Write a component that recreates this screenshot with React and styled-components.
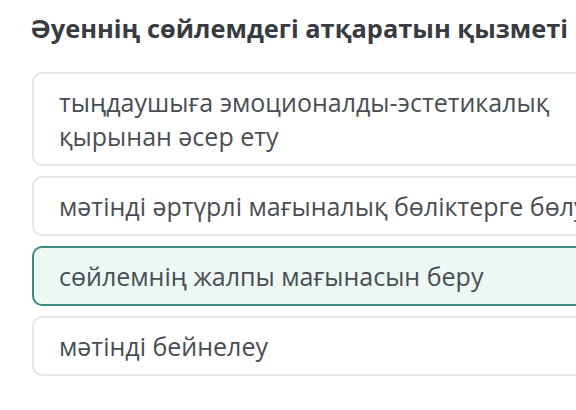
import React from 'react'
import styled, { createGlobalStyle } from 'styled-components'

const GlobalStyle = createGlobalStyle`
  html, body {
    margin: 0;
    padding: 0;
    background: #ffffff;
    overflow: hidden;
  }
  body {
    font-family: "Open Sans", "Noto Sans", sans-serif;
  }
`

const Page = styled.div`
  width: 576px;
  height: 410px;
  overflow: hidden;
  padding: 11px 0 0 30px;
  box-sizing: border-box;
`

const Question = styled.h2`
  margin: 0;
  font-size: 25.4px;
  font-weight: 700;
  color: #383b41;
  white-space: nowrap;
  line-height: 34px;
`

const Answers = styled.div`
  display: flex;
  flex-direction: column;
  gap: 10px;
  margin-top: 27px;
  margin-left: 2px;
  width: 640px;
`

const Answer = styled.div`
  border: 2px solid ${p => (p.selected ? '#3e8a84' : '#e6e6e6')};
  background: ${p => (p.selected ? '#edf8f4' : '#ffffff')};
  border-radius: 10px;
  padding: 11px 40px 11px 25px;
  font-size: 25px;
  line-height: 34px;
  color: #4a4d53;
  white-space: ${p => (p.nowrap ? 'nowrap' : 'normal')};
`

const items = [
  { text: 'тыңдаушыға эмоционалды-эстетикалық қырынан әсер ету' },
  { text: 'мәтінді әртүрлі мағыналық бөліктерге бөлу', nowrap: true },
  { text: 'сөйлемнің жалпы мағынасын беру', selected: true },
  { text: 'мәтінді бейнелеу' },
]

export default function App() {
  return (
    <Page>
      <GlobalStyle />
      <Question>Әуеннің сөйлемдегі атқаратын қызметі не?</Question>
      <Answers>
        {items.map((it, i) => (
          <Answer key={i} selected={it.selected} nowrap={it.nowrap}>
            {it.text}
          </Answer>
        ))}
      </Answers>
    </Page>
  )
}
